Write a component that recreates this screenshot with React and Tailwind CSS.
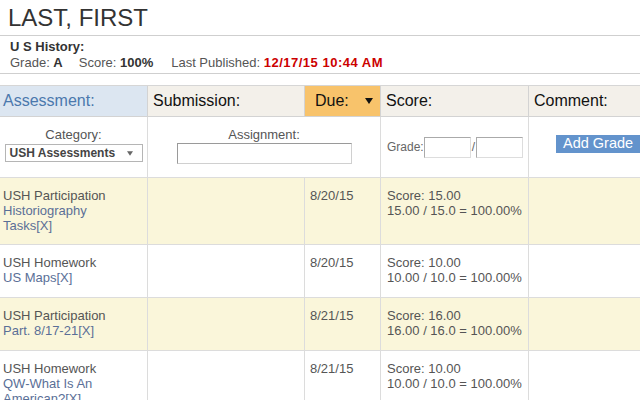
import React from "react";

const Tri = ({ className }) => (
  <svg className={className} width="8" height="6" viewBox="0 0 8 6">
    <path d="M0 0 L8 0 L4 6 Z" fill="currentColor" />
  </svg>
);

const rows = [
  {
    bg: "bg-[#faf6da]",
    cat: "USH Participation",
    name: ["Historiography", "Tasks[X]"],
    due: "8/20/15",
    score: "Score: 15.00",
    calc: "15.00 / 15.0 = 100.00%",
  },
  {
    bg: "bg-white",
    cat: "USH Homework",
    name: ["US Maps[X]"],
    due: "8/20/15",
    score: "Score: 10.00",
    calc: "10.00 / 10.0 = 100.00%",
  },
  {
    bg: "bg-[#faf6da]",
    cat: "USH Participation",
    name: ["Part. 8/17-21[X]"],
    due: "8/21/15",
    score: "Score: 16.00",
    calc: "16.00 / 16.0 = 100.00%",
  },
  {
    bg: "bg-white",
    cat: "USH Homework",
    name: ["QW-What Is An", "American?[X]"],
    due: "8/21/15",
    score: "Score: 10.00",
    calc: "10.00 / 10.0 = 100.00%",
  },
];

export default function App() {
  return (
    <div className="w-[640px] h-[400px] overflow-hidden bg-white font-['Liberation_Sans',Arial,sans-serif]">
      <div className="pt-[4px] pb-[3px] pl-[8px] border-b border-[#cfcfcf]">
        <div className="text-[24px] leading-[28px] text-[#333]">LAST, FIRST</div>
      </div>
      <div className="pt-[3px] pb-[2px] pl-[10px] border-b border-[#cfcfcf] text-[13px] leading-[16px]">
        <div className="font-bold text-[#333]">U S History:</div>
        <div className="text-[#555] whitespace-nowrap">
          <span>Grade: </span>
          <span className="font-bold text-[#333] mr-[16px]">A</span>
          <span>Score: </span>
          <span className="font-bold text-[#333] mr-[18px]">100%</span>
          <span>Last Published: </span>
          <span className="font-bold text-[#cc0000] tracking-[0.5px]">12/17/15 10:44 AM</span>
        </div>
      </div>

      <div className="mt-[11px] border-t border-[#d6d6d6] grid grid-cols-[148px_157px_76px_148px_1fr]">
        {/* header */}
        <div className="h-[31px] flex items-center pl-[3px] bg-[#dce6f1] border-r border-b border-[#d3d3d3] text-[16px] text-[#4b78ad]">
          Assessment:
        </div>
        <div className="h-[31px] flex items-center pl-[5px] bg-[#f3f0ea] border-r border-b border-[#d3d3d3] text-[16px] text-[#111]">
          Submission:
        </div>
        <div className="h-[31px] flex items-center justify-between pl-[10px] pr-[7px] bg-[#f8c36b] border-r border-b border-[#d3d3d3] text-[16px] text-[#111]">
          <span>Due:</span>
          <Tri className="text-[#111]" />
        </div>
        <div className="h-[31px] flex items-center pl-[5px] bg-[#f3f0ea] border-r border-b border-[#d3d3d3] text-[16px] text-[#111]">
          Score:
        </div>
        <div className="h-[31px] flex items-center pl-[5px] bg-[#f3f0ea] border-b border-[#d3d3d3] text-[16px] text-[#111]">
          Comment:
        </div>

        {/* filter row */}
        <div className="h-[61px] flex flex-col items-center pt-[10px] border-r border-b border-[#dcdcdc]">
          <div className="text-[13px] leading-[15px] text-[#555]">Category:</div>
          <div className="mt-[2px] w-[138px] h-[18px] flex items-center justify-between pl-[4px] pr-[9px] border border-[#b5b5b5] bg-white">
            <span className="text-[12px] font-bold text-[#444]">USH Assessments</span>
            <Tri className="text-[#666] w-[6px] h-[5px]" />
          </div>
        </div>
        <div className="col-span-2 h-[61px] flex flex-col items-center pt-[10px] border-r border-b border-[#dcdcdc]">
          <div className="text-[13px] leading-[15px] text-[#555]">Assignment:</div>
          <div className="mt-[1px] w-[175px] h-[21px] bg-white border border-t-[#9a9a9a] border-l-[#9a9a9a] border-r-[#d0d0d0] border-b-[#d0d0d0]" />
        </div>
        <div className="h-[61px] flex items-center pl-[6px] border-r border-b border-[#dcdcdc]">
          <span className="text-[12px] text-[#666]">Grade:</span>
          <div className="w-[47px] h-[21px] bg-white border border-t-[#aaa] border-l-[#aaa] border-r-[#ddd] border-b-[#ddd]" />
          <span className="text-[12px] text-[#666] mx-[1px]">/</span>
          <div className="w-[47px] h-[21px] bg-white border border-t-[#aaa] border-l-[#aaa] border-r-[#ddd] border-b-[#ddd]" />
        </div>
        <div className="h-[61px] flex items-start pt-[18px] pl-[27px] border-b border-[#dcdcdc]">
          <div className="h-[18px] flex items-center px-[7px] bg-[#6393cc] text-white text-[14.5px] whitespace-nowrap">
            Add Grade
          </div>
        </div>

        {rows.map((r, i) => (
          <React.Fragment key={i}>
            <div className={`${r.bg} min-h-[53px] pl-[3px] pt-[10px] pb-[11px] border-r border-b border-[#dcdcdc] text-[13px] leading-[15px]`}>
              <div className="text-[#555]">{r.cat}</div>
              {r.name.map((n, j) => (
                <div key={j} className="text-[#5a6f97]">{n}</div>
              ))}
            </div>
            <div className={`${r.bg} border-r border-b border-[#dcdcdc]`} />
            <div className={`${r.bg} pl-[5px] pt-[10px] border-r border-b border-[#dcdcdc] text-[13px] leading-[15px] text-[#555]`}>
              {r.due}
            </div>
            <div className={`${r.bg} pl-[6px] pt-[10px] border-r border-b border-[#dcdcdc] text-[13px] leading-[15px] text-[#555] whitespace-nowrap`}>
              <div>{r.score}</div>
              <div>{r.calc}</div>
            </div>
            <div className={`${r.bg} border-b border-[#dcdcdc]`} />
          </React.Fragment>
        ))}
      </div>
    </div>
  );
}
